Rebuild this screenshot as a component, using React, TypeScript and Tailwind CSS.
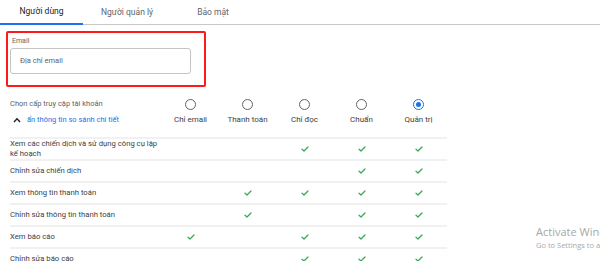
import { useState } from "react";

type Row = {
  id: number;
  label: string;
  checks: boolean[];
};

const levels = ["Chỉ email", "Thanh toán", "Chỉ đọc", "Chuẩn", "Quản trị"];

const rows: Row[] = [
  {
    id: 0,
    label: "Xem các chiến dịch và sử dụng công cụ lập kế hoạch",
    checks: [false, false, true, true, true],
  },
  { id: 1, label: "Chỉnh sửa chiến dịch", checks: [false, false, false, true, true] },
  { id: 2, label: "Xem thông tin thanh toán", checks: [false, true, true, true, true] },
  {
    id: 3,
    label: "Chỉnh sửa thông tin thanh toán",
    checks: [false, true, false, true, true],
  },
  { id: 4, label: "Xem báo cáo", checks: [true, false, true, true, true] },
  { id: 5, label: "Chỉnh sửa báo cáo", checks: [false, false, true, true, true] },
];

function Check() {
  return (
    <svg width="8" height="6" viewBox="0 0 8 6" fill="none">
      <path d="M1 3.2 L3 5 L7 1" stroke="#34a853" strokeWidth="1.2" strokeLinecap="round" strokeLinejoin="round" />
    </svg>
  );
}

function Radio({ checked }: { checked: boolean }) {
  return checked ? (
    <div className="w-[11px] h-[11px] rounded-full border-[1.5px] border-[#1a73e8] flex items-center justify-center">
      <div className="w-[5px] h-[5px] rounded-full bg-[#1a73e8]" />
    </div>
  ) : (
    <div className="w-[11px] h-[11px] rounded-full border-[1.5px] border-[#5f6368]" />
  );
}

export default function App() {
  const [level, setLevel] = useState(4);

  return (
    <div className="relative w-[600px] h-[261px] overflow-hidden bg-white font-['Roboto','Liberation_Sans',sans-serif]">
      <div className="flex h-[25px] border-b border-[#c8c8c8]">
        <div className="w-[83px] flex items-center justify-center text-[8.5px] text-[#202124] border-b-2 border-[#1a73e8] -mb-px">
          Người dùng
        </div>
        <div className="w-[88px] flex items-center justify-center text-[8.5px] text-[#5f6368]">
          Người quản lý
        </div>
        <div className="w-[84px] flex items-center justify-center text-[8.5px] text-[#5f6368]">
          Bảo mật
        </div>
      </div>

      <div className="ml-[6px] mt-[6px] w-[200px] h-[56px] border-2 border-[#ff1a1a] rounded-[2px] pt-[4px] pl-[3px]">
        <div className="h-[9px] leading-[9px] text-[7px] text-[#5f6368] pl-[1px]">Email</div>
        <div className="mt-[2px] ml-[-1px] w-[181px] h-[26px] border border-[#c4c4c4] rounded-[3px] flex items-center pl-[9px] text-[7.5px] text-[#5f6368]">
          Địa chỉ email
        </div>
      </div>

      <div className="px-[10px] mt-[11px]">
        <div className="grid grid-cols-[152px_repeat(5,57px)] h-[12px] items-center">
          <div className="text-[7.5px] text-[#5f6368] whitespace-nowrap">Chọn cấp truy cập tài khoản</div>
          {levels.map((l, i) => (
            <div key={l} className="flex justify-center cursor-pointer" onClick={() => setLevel(i)}>
              <Radio checked={level === i} />
            </div>
          ))}
        </div>
        <div className="grid grid-cols-[152px_repeat(5,57px)] h-[12px] mt-[4px] items-center">
          <div className="flex items-center gap-[5px] whitespace-nowrap">
            <svg width="8" height="6" viewBox="0 0 8 6" fill="none" className="ml-[3px]">
              <path d="M1 5 L4 1.8 L7 5" stroke="#202124" strokeWidth="1.4" />
            </svg>
            <span className="text-[7.5px] text-[#1a73e8] ml-[1px]">ẩn thông tin so sánh chi tiết</span>
          </div>
          {levels.map((l) => (
            <div key={l} className="text-center text-[8px] text-[#3c4043] whitespace-nowrap">
              {l}
            </div>
          ))}
        </div>

        <div className="mt-[11px] w-[437px]">
          {rows.map((row) => (
            <div
              key={row.id}
              className="grid grid-cols-[152px_repeat(5,57px)] h-[22px] border-t-2 border-[#f1f1f1] items-center"
            >
              <div className="text-[7.7px] leading-[10px] text-[#3c4043]">{row.label}</div>
              {row.checks.map((c, i) => (
                <div key={i} className="flex justify-center">
                  {c && <Check />}
                </div>
              ))}
            </div>
          ))}
        </div>
      </div>

      <div className="absolute left-[536px] top-[224px] whitespace-nowrap font-['Open_Sans',sans-serif] text-[#a8a8a8]">
        <div className="text-[11px] leading-[15px]">Activate Windows</div>
        <div className="text-[7.5px] leading-[10px] mt-[1px]">Go to Settings to activate Windows.</div>
      </div>
    </div>
  );
}
